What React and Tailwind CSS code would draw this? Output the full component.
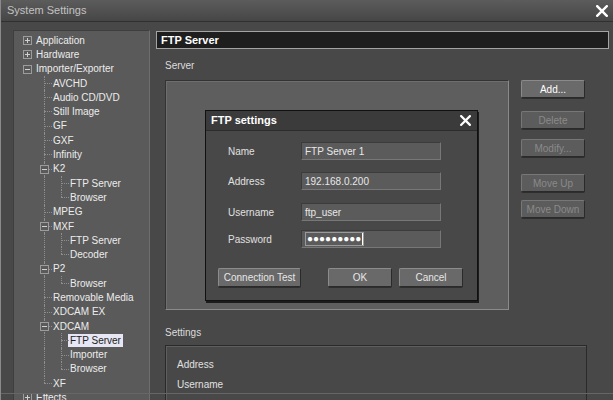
const tree = [
  { label: "Application", level: 0, exp: "+" },
  { label: "Hardware", level: 0, exp: "+" },
  { label: "Importer/Exporter", level: 0, exp: "-" },
  { label: "AVCHD", level: 1 },
  { label: "Audio CD/DVD", level: 1 },
  { label: "Still Image", level: 1 },
  { label: "GF", level: 1 },
  { label: "GXF", level: 1 },
  { label: "Infinity", level: 1 },
  { label: "K2", level: 1, exp: "-" },
  { label: "FTP Server", level: 2 },
  { label: "Browser", level: 2, last: true },
  { label: "MPEG", level: 1 },
  { label: "MXF", level: 1, exp: "-" },
  { label: "FTP Server", level: 2 },
  { label: "Decoder", level: 2, last: true },
  { label: "P2", level: 1, exp: "-" },
  { label: "Browser", level: 2, last: true },
  { label: "Removable Media", level: 1 },
  { label: "XDCAM EX", level: 1 },
  { label: "XDCAM", level: 1, exp: "-" },
  { label: "FTP Server", level: 2, selected: true },
  { label: "Importer", level: 2 },
  { label: "Browser", level: 2, last: true },
  { label: "XF", level: 1, last: true },
  { label: "Effects", level: 0, exp: "+" },
];

function Expander({ sign }) {
  return (
    <div className="absolute left-[4px] top-[3px] w-[9px] h-[9px] border border-[#9c9c9c] bg-[#5a5a5a]">
      <div className="absolute left-[1px] right-[1px] top-[3px] h-px bg-[#d0d0d0]" />
      {sign === "+" && <div className="absolute top-[1px] bottom-[1px] left-[3px] w-px bg-[#d0d0d0]" />}
    </div>
  );
}

function TreeRow({ item }) {
  const cells = [];
  for (let i = 0; i <= item.level; i++) {
    const own = i === item.level;
    cells.push(
      <div key={i} className="relative w-[17px] h-full shrink-0">
        {!own && i >= 1 && (
          <div className="absolute left-[8px] top-0 bottom-0 border-l border-dotted border-[#8e8e8e]" />
        )}
        {own && item.level > 0 && (
          <>
            <div
              className={
                item.last
                  ? "absolute left-[8px] top-0 h-[7px] border-l border-dotted border-[#8e8e8e]"
                  : "absolute left-[8px] top-0 bottom-0 border-l border-dotted border-[#8e8e8e]"
              }
            />
            <div className="absolute left-[8px] right-[1px] top-[7px] border-t border-dotted border-[#8e8e8e]" />
          </>
        )}
        {own && item.exp && <Expander sign={item.exp} />}
      </div>
    );
  }
  return (
    <div className="flex h-[14.3px] items-center">
      {cells}
      <span
        className={
          item.selected
            ? "-ml-[2px] px-[2px] h-[13px] leading-[13px] bg-[#e6e6f4] text-[#1e1e1e]"
            : "leading-[13px] text-[#ececec] whitespace-nowrap"
        }
      >
        {item.label}
      </span>
    </div>
  );
}

function SideButton({ children, disabled, className }) {
  return (
    <div
      className={
        (disabled
          ? "bg-[#5c5c5c] text-[#8a8a8a] border-[#777]"
          : "bg-[#6a6a6a] text-white border-[#8a8a8a]") +
        " w-[64px] h-[18px] flex items-center justify-center border border-b-[#2a2a2a] border-r-[#2a2a2a] rounded-[2px] shadow-[0_1px_0_#2e2e2e] " +
        className
      }
    >
      {children}
    </div>
  );
}

function DlgButton({ children, className }) {
  return (
    <div
      className={
        "h-[19px] flex items-center justify-center bg-[#696969] text-[#e6e6e6] border border-[#8c8c8c] border-b-[#2a2a2a] border-r-[#2a2a2a] rounded-[2px] shadow-[0_1px_0_#2e2e2e] " +
        className
      }
    >
      {children}
    </div>
  );
}

function Field({ label, value, className, password }) {
  return (
    <div className={"flex items-center " + className}>
      <div className="w-[73px] text-[#e0e0e0]">{label}</div>
      <div className="w-[140px] h-[18px] bg-[#5b5b5b] border border-[#3c3c3c] border-b-[#777] border-r-[#777] flex items-center pl-[3px] text-[#e8e8e8]">
        {password ? (
          <span className="flex items-center h-[14px] border border-[#9a9a9a] pl-[1px]">
            <span className="text-white text-[10px] leading-[12px]">●●●●●●●●●</span>
            <span className="ml-[1px] w-px h-[12px] bg-white" />
          </span>
        ) : (
          value
        )}
      </div>
    </div>
  );
}

function CloseX({ size }) {
  return (
    <svg width={size} height={size} viewBox="0 0 10 10">
      <path d="M1 1 L9 9 M9 1 L1 9" stroke="white" strokeWidth="2" strokeLinecap="square" />
    </svg>
  );
}

export default function App() {
  return (
    <div
      className="relative w-[613px] h-[400px] overflow-hidden bg-[#484848] text-[10px] border-l border-[#8a8a8a]"
      style={{ fontFamily: '"Liberation Sans", Arial, sans-serif' }}
    >
      {/* title bar */}
      <div className="h-[22px] flex items-center justify-between pl-[6px] pr-[5px] bg-linear-to-b from-[#5c5c5c] to-[#464646] border-b border-[#303030]">
        <span className="text-[11px] text-[#c2c2c2]">System Settings</span>
        <CloseX size={12} />
      </div>

      <div className="flex pl-[12px] pt-[8px] pr-[4px] gap-[6px]">
        {/* tree */}
        <div className="w-[137px] h-[380px] shrink-0 bg-[#5a5a5a] border border-[#3e3e3e] border-r-[#6e6e6e] pl-[5px] pt-[2px]">
          {tree.map((item, i) => (
            <TreeRow key={i} item={item} />
          ))}
        </div>

        {/* right side */}
        <div className="flex-1 flex flex-col">
          <div className="mt-[1px] h-[18px] bg-[#1e1e1e] border border-[#a4a4a4] flex items-center pl-[4px] text-white font-bold text-[11px]">
            FTP Server
          </div>

          <div className="mt-[11px] ml-[9px] h-[12px] leading-[12px] text-[#dcdcdc]">Server</div>

          <div className="mt-[8px] ml-[9px] flex">
            <div className="relative w-[344px] h-[230px] bg-[#5e5e5e] border border-[#333] border-r-[#8a8a8a] border-b-[#8a8a8a] shadow-[inset_1px_1px_0_#6e6e6e]">
              {/* FTP settings dialog */}
              <div className="absolute left-[39px] top-[29px] w-[273px] h-[191px] bg-[#484848] border border-[#111] shadow-[1px_2px_0_#1c1c1c] flex flex-col">
                <div className="h-[20px] bg-[#3b3b3b] border-b border-[#2c2c2c] flex items-center justify-between pl-[5px] pr-[6px]">
                  <span className="text-white font-bold text-[11px]">FTP settings</span>
                  <CloseX size={11} />
                </div>
                <div className="pl-[22px]">
                  <Field label="Name" value="FTP Server 1" className="mt-[11px]" />
                  <Field label="Address" value="192.168.0.200" className="mt-[12px]" />
                  <Field label="Username" value="ftp_user" className="mt-[13px]" />
                  <Field label="Password" password className="mt-[9px]" />
                </div>
                <div className="flex mt-[20px] pl-[12px]">
                  <DlgButton className="w-[83px]">Connection Test</DlgButton>
                  <DlgButton className="w-[64px] ml-[27px]">OK</DlgButton>
                  <DlgButton className="w-[64px] ml-[7px]">Cancel</DlgButton>
                </div>
              </div>
            </div>

            <div className="ml-[12px] flex flex-col">
              <SideButton className="">Add...</SideButton>
              <SideButton disabled className="mt-[13px]">Delete</SideButton>
              <SideButton disabled className="mt-[10px]">Modify...</SideButton>
              <SideButton disabled className="mt-[17px]">Move Up</SideButton>
              <SideButton disabled className="mt-[8px]">Move Down</SideButton>
            </div>
          </div>

          <div className="mt-[17px] ml-[9px] h-[12px] leading-[12px] text-[#dcdcdc]">Settings</div>

          <div className="mt-[6px] ml-[9px] w-[422px] h-[80px] border border-[#2a2a2a] shadow-[inset_1px_1px_0_#5e5e5e] pl-[11px] pt-[13px] text-[#e0e0e0]">
            <div className="h-[20px] leading-[12px]">Address</div>
            <div className="h-[20px] leading-[12px]">Username</div>
          </div>
        </div>
      </div>

      <div className="absolute left-0 right-0 top-[393px] h-px bg-[#666]" />
    </div>
  );
}
